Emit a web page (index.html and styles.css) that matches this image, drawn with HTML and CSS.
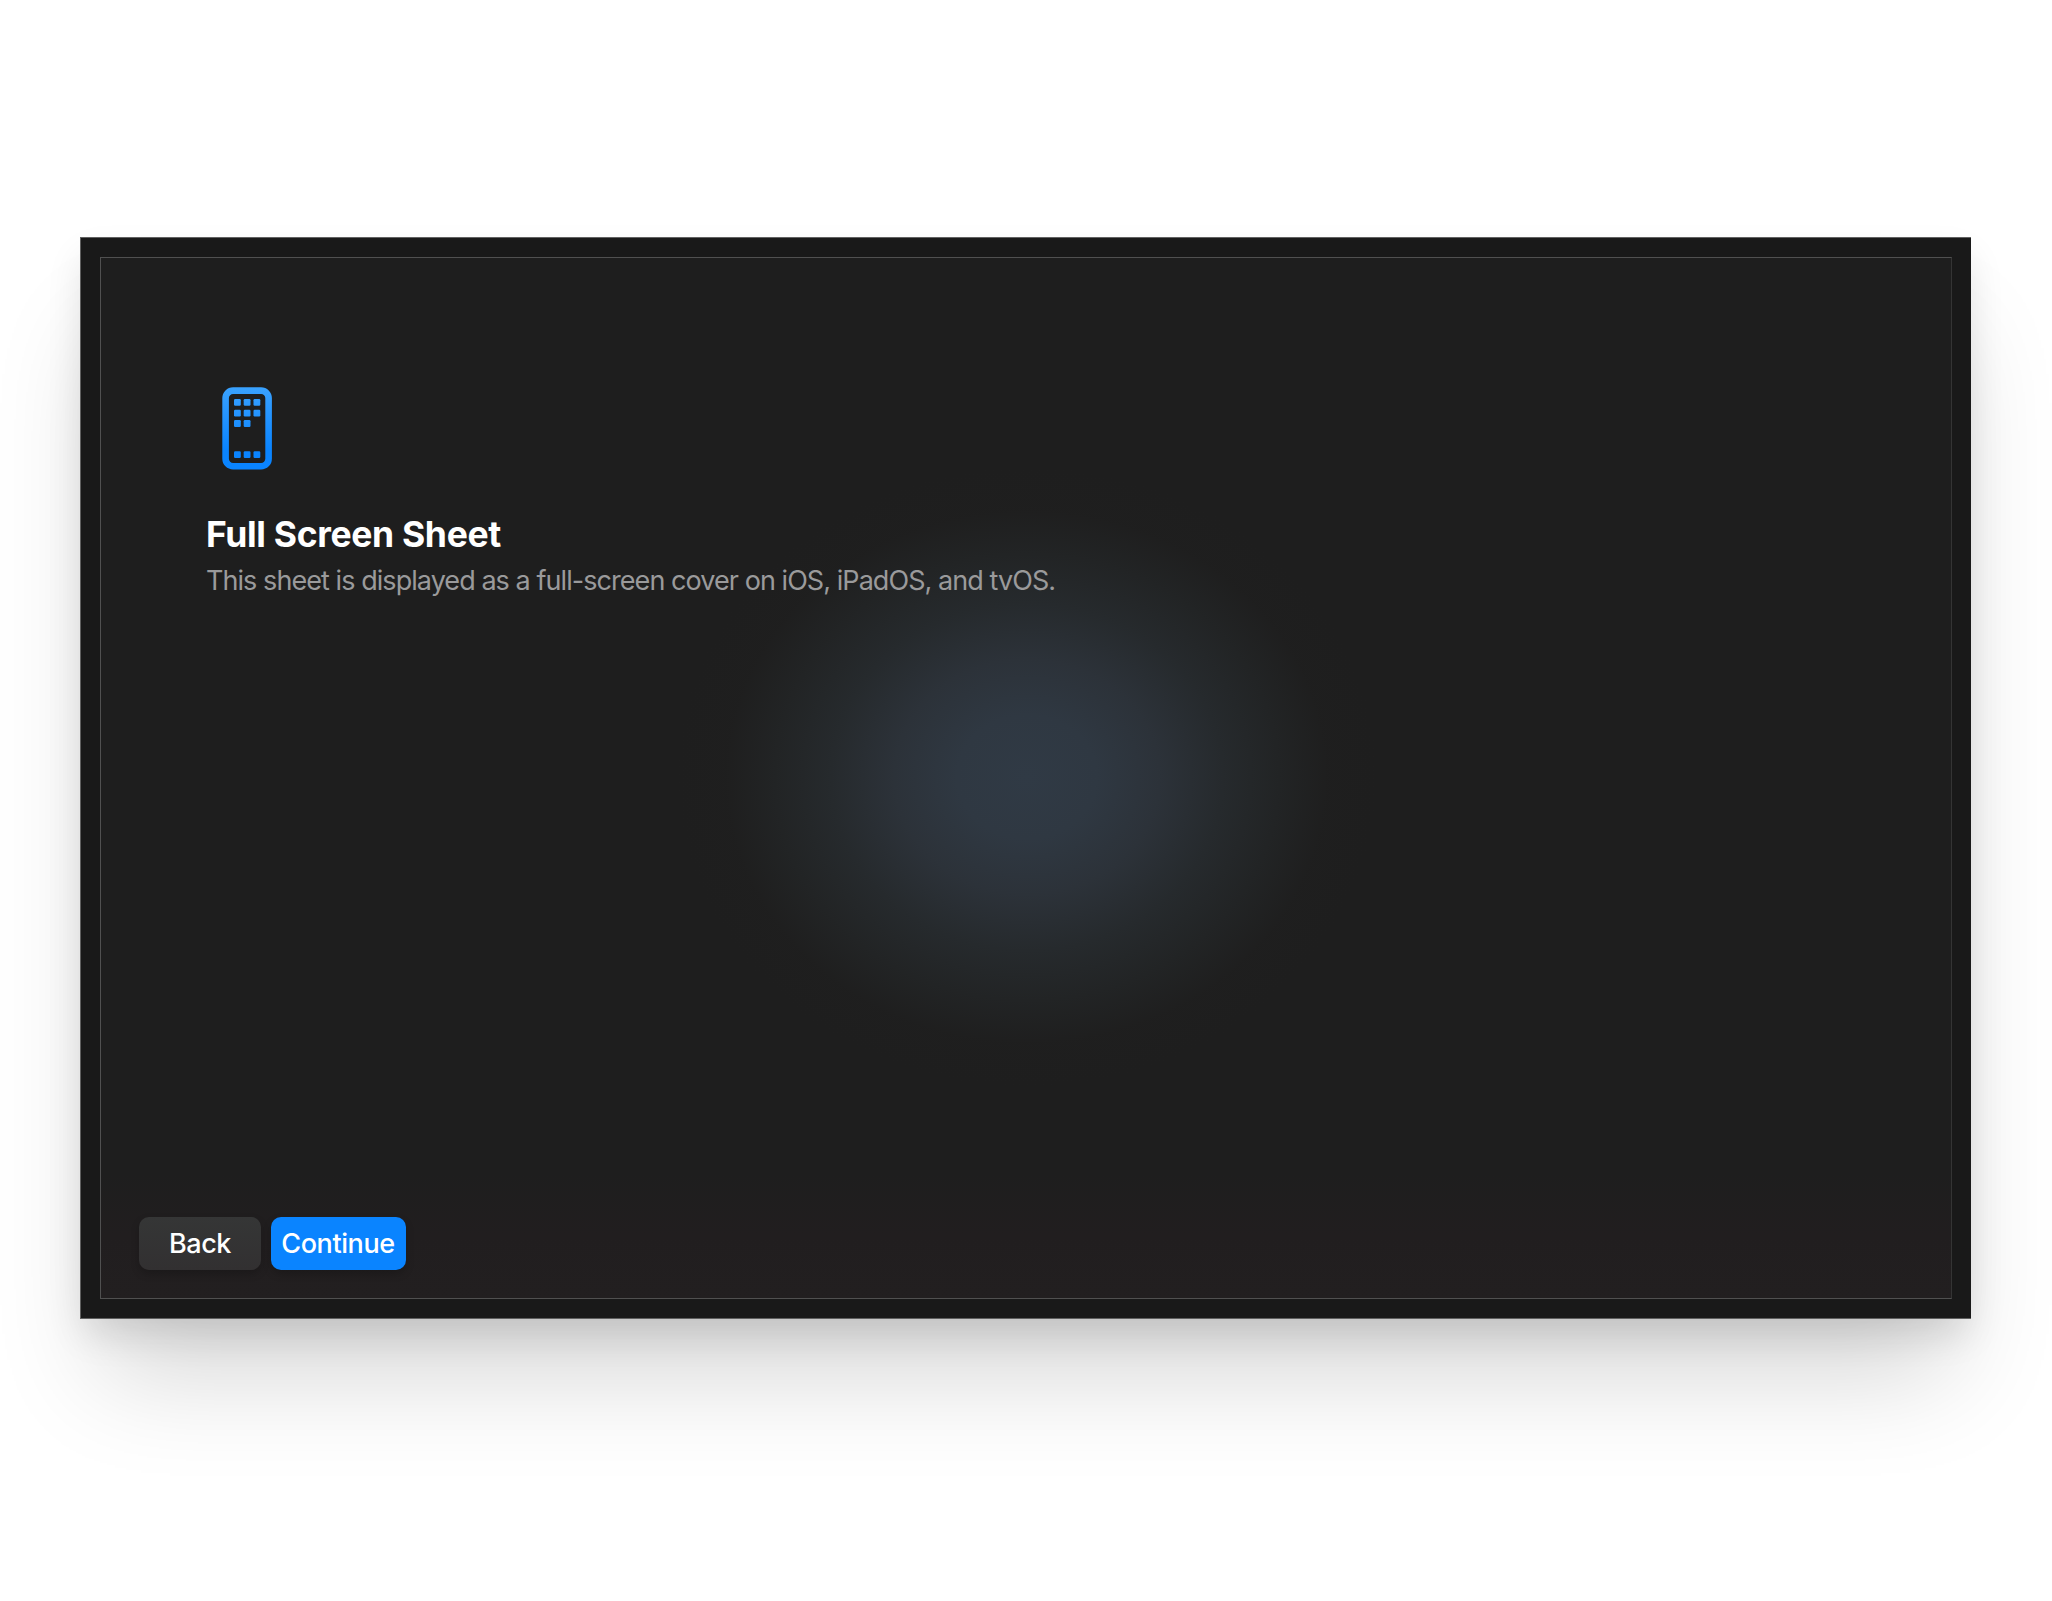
FILE: index.html
```html
<!DOCTYPE html>
<html lang="en">
<head>
<meta charset="utf-8">
<title>Full Screen Sheet</title>
<link rel="stylesheet" href="styles.css">
</head>
<body>
<main class="window">
  <section class="sheet">
    <header class="intro">
      <svg class="icon" width="50" height="83" viewBox="0 0 50 83" aria-hidden="true">
        <defs>
          <linearGradient id="blue" gradientUnits="userSpaceOnUse" x1="0" y1="0" x2="0" y2="83">
            <stop offset="0" stop-color="#3aa2ff"/>
            <stop offset="0.75" stop-color="#0a84ff"/>
          </linearGradient>
        </defs>
        <rect x="3.6" y="3.6" width="43" height="75.6" rx="7.5" fill="none" stroke="url(#blue)" stroke-width="6.6"/>
        <g fill="url(#blue)">
          <rect x="12" y="12" width="6.8" height="6.8" rx="1.2"/>
          <rect x="21.7" y="12" width="6.8" height="6.8" rx="1.2"/>
          <rect x="31.5" y="12" width="6.8" height="6.8" rx="1.2"/>
          <rect x="12" y="22.7" width="6.8" height="6.8" rx="1.2"/>
          <rect x="21.7" y="22.7" width="6.8" height="6.8" rx="1.2"/>
          <rect x="31.5" y="22.7" width="6.8" height="6.8" rx="1.2"/>
          <rect x="12" y="33.1" width="6.8" height="6.8" rx="1.2"/>
          <rect x="21.7" y="33.1" width="6.8" height="6.8" rx="1.2"/>
          <rect x="12" y="64.2" width="6.8" height="6.8" rx="1.2"/>
          <rect x="21.7" y="64.2" width="6.8" height="6.8" rx="1.2"/>
          <rect x="31.5" y="64.2" width="6.8" height="6.8" rx="1.2"/>
        </g>
      </svg>
      <h1 class="title">Full Screen Sheet</h1>
      <p class="subtitle">This sheet is displayed as a full-screen cover on iOS, iPadOS, and tvOS.</p>
    </header>
    <footer class="actions">
      <button class="button button-back" type="button">Back</button>
      <button class="button button-continue" type="button">Continue</button>
    </footer>
  </section>
</main>
</body>
</html>
```
FILE: styles.css
```css
* {
  box-sizing: border-box;
}

body {
  margin: 0;
  height: 1601px;
  padding: 237px 81px 282px 80px;
  background: #fff;
  font-family: Inter, "Liberation Sans", sans-serif;
  overflow: hidden;
}

.window {
  height: 1082px;
  padding: 19px;
  background: #191919;
  border: 1px solid #606060;
  border-right-width: 0;
  box-shadow: 0 18px 36px -4px rgba(0, 0, 0, 0.12), 0 76px 100px -20px rgba(0, 0, 0, 0.16);
}

.sheet {
  height: 1042px;
  display: flex;
  flex-direction: column;
  justify-content: space-between;
  padding: 129px 38px 28px;
  border: 1px solid #505050;
  border-right-color: #343434;
  background:
    radial-gradient(ellipse 350px 310px at 926px 519px, #303a45 0%, #2f3842 20%, #2c3239 38%, #262a2d 56%, #222425 72%, rgba(31, 31, 31, 0.6) 86%, rgba(30, 30, 30, 0) 100%),
    linear-gradient(#1e1e1e 0%, #1e1e1e 88%, #211e1f 94%, #221f20 100%);
}

.intro {
  padding-left: 67px;
}

.icon {
  display: block;
  margin-left: 16px;
}

.title {
  margin: 43px 0 0;
  font-size: 35.5px;
  line-height: 44px;
  font-weight: 700;
  letter-spacing: -0.33px;
  color: #fff;
  white-space: nowrap;
}

.subtitle {
  margin: 7px 0 0;
  font-size: 27px;
  line-height: 34px;
  font-weight: 400;
  letter-spacing: -0.94px;
  color: #9a9a9b;
  white-space: nowrap;
}

.actions {
  display: flex;
  gap: 10px;
}

.button {
  height: 53px;
  padding: 0;
  border: 0;
  border-radius: 10px;
  font: 450 27px/53px Inter, "Liberation Sans", sans-serif;
  letter-spacing: -0.4px;
  color: #fff;
  box-shadow: 0 4px 8px rgba(0, 0, 0, 0.2);
}

.button-back {
  width: 122px;
  background: linear-gradient(#353636, #323031);
}

.button-continue {
  width: 135px;
  padding-right: 1px;
  background: #0a84ff;
}
```
